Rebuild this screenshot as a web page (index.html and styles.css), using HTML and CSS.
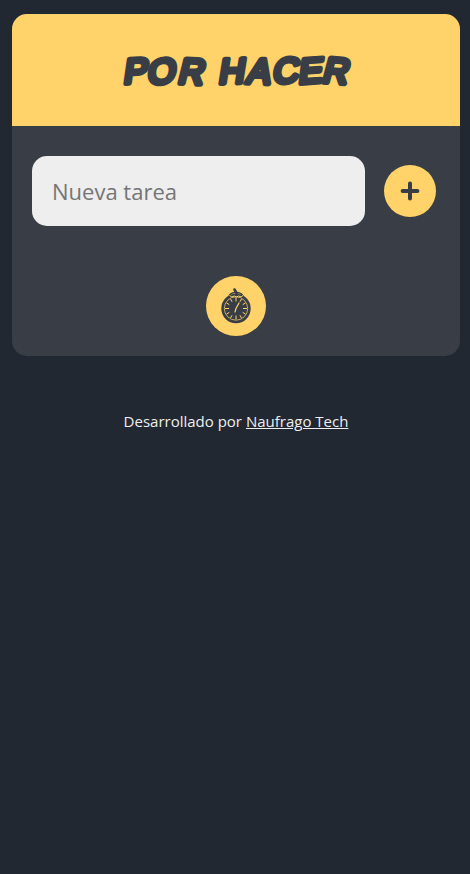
FILE: index.html
```html
<!DOCTYPE html>
<html lang="es">
<head>
<meta charset="utf-8">
<meta name="viewport" content="width=device-width, initial-scale=1">
<title>Por hacer</title>
<link rel="stylesheet" href="styles.css">
</head>
<body>
<main class="card">
  <header class="card-header">
    <h1 class="title">
      <svg class="title-art" viewBox="0 0 240 50" width="240" height="50">
        <text class="title-text" transform="translate(6.5 0) skewX(-11)" y="38.5 39.5 38 38 38.5 38 38 38.5 37" x="8 32.5 62 90 103 130.5 157 183 206" rotate="-3 -5 3 0 -2 2 -2 -4 4">POR HACER</text>
      </svg>
    </h1>
  </header>
  <section class="card-body">
    <form class="task-form">
      <input class="task-input" type="text" placeholder="Nueva tarea" aria-label="Nueva tarea">
      <button class="add-button" type="button" aria-label="Agregar">
        <svg viewBox="0 0 20 20" width="20" height="20"><path class="plus" d="M10 2.6V17.4M2.6 10H17.4"/></svg>
      </button>
    </form>
    <button class="timer-button" type="button" aria-label="Temporizador">
      <svg viewBox="0 0 36 40" width="36" height="40">
        <path class="dark-line" d="M16.5 3.5 19 8"/>
        <path class="dark-line thin" d="M11 10.5Q12 6.5 18 6.5T25 10.5"/>
        <circle class="dial" cx="18" cy="22.5" r="14.7"/>
        <circle class="dial-ring" cx="18" cy="22.5" r="11.7"/>
        <path class="marks" d="M18 11.5v4M18 29.5v4M7 22.5h4M25 22.5h4M12.5 13l1.6 2.8M23.5 13l-1.6 2.8M8.5 17l2.8 1.6M27.5 17l-2.8 1.6M8.5 28l2.8-1.6M27.5 28l-2.8-1.6M12.5 32l1.6-2.8M23.5 32l-1.6-2.8"/>
        <path class="marks" d="M11.5 9.5q2 2.5 5 .5 2 2 4 0 3 2 4.5-.5"/>
        <path class="hand" d="M17 26 18 22.5 21 17"/>
      </svg>
    </button>
  </section>
</main>
<footer class="credits">Desarrollado por <a class="credits-link" href="#">Naufrago Tech</a></footer>
</body>
</html>
```
FILE: styles.css
```css
* { box-sizing: border-box; }
body {
  margin: 0;
  padding: 14px 10px 0 12px;
  min-height: 100vh;
  background: #222831;
  color: #eee;
  font-family: "Open Sans", sans-serif;
}
.card {
  height: 342px;
  border-radius: 15px;
  overflow: hidden;
  background: #393e46;
}
.card-header {
  height: 112px;
  display: flex;
  align-items: center;
  justify-content: center;
  background: #ffd369;
}
.title { margin: 0; line-height: 0; }
.title-art { display: block; overflow: visible; }
.title-text {
  font: 400 35px "Liberation Sans", sans-serif;
  fill: #393e46;
  stroke: #393e46;
  stroke-width: 5.2px;
  stroke-linejoin: round;
}
.card-body {
  display: flex;
  flex-direction: column;
  align-items: center;
  padding: 30px 24px 20px 20px;
}
.task-form {
  width: 100%;
  display: flex;
  align-items: center;
  justify-content: space-between;
}
.task-input {
  width: 333px;
  height: 70px;
  padding: 0 20px;
  border: 0;
  border-radius: 15px;
  background: #eee;
  color: #393e46;
  font: 22px "Open Sans", sans-serif;
}
.task-input::placeholder { color: #757575; }
.add-button, .timer-button {
  display: flex;
  align-items: center;
  justify-content: center;
  padding: 0;
  border: 0;
  border-radius: 50%;
  background: #ffd369;
}
.add-button { width: 52px; height: 52px; }
.timer-button { width: 60px; height: 60px; margin: 50px 0 0 4px; }
.plus { stroke: #393e46; stroke-width: 4; stroke-linecap: round; }
.dark-line { fill: none; stroke: #393e46; stroke-width: 2.6; stroke-linecap: round; }
.thin { stroke-width: 1.5; }
.dial { fill: #393e46; }
.dial-ring { fill: none; stroke: #ffd369; stroke-width: .7; }
.marks { fill: none; stroke: #ffd369; stroke-width: 1; }
.hand { fill: none; stroke: #ffd369; stroke-width: 1.2; stroke-linecap: round; }
.credits {
  margin-top: 54px;
  text-align: center;
  font-size: 15px;
  line-height: 22px;
}
.credits-link { color: #eee; }
```
